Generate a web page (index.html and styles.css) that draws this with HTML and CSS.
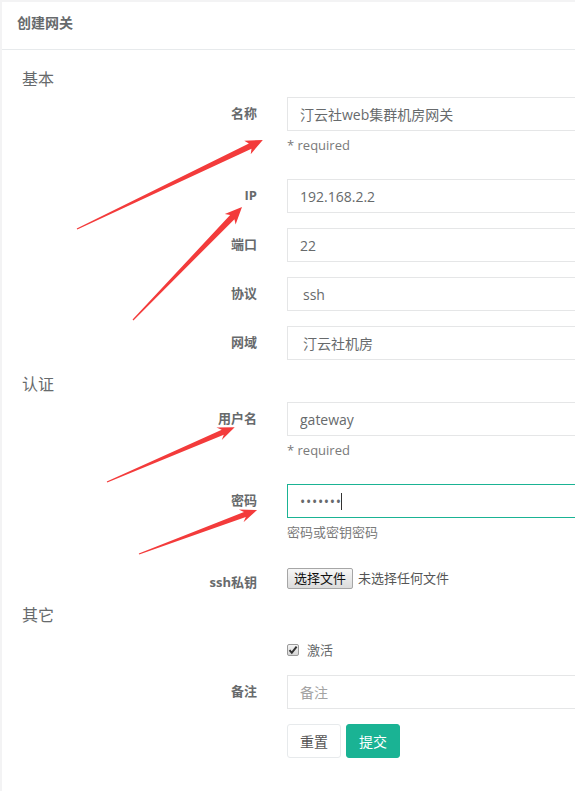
FILE: index.html
```html
<!DOCTYPE html>
<html lang="zh-CN">
<head>
<meta charset="utf-8">
<title>创建网关</title>
<link rel="stylesheet" href="styles.css">
</head>
<body>
<div class="card">
  <div class="card-title"><h5>创建网关</h5></div>
  <div class="card-body">
    <form class="form">
      <h4 class="section">基本</h4>
      <div class="row">
        <label class="lbl">名称</label>
        <div class="ctl">
          <input class="input" type="text" value="汀云社web集群机房网关">
          <p class="help">* required</p>
        </div>
      </div>
      <div class="row">
        <label class="lbl">IP</label>
        <div class="ctl"><input class="input" type="text" value="192.168.2.2"></div>
      </div>
      <div class="row">
        <label class="lbl">端口</label>
        <div class="ctl"><input class="input" type="text" value="22"></div>
      </div>
      <div class="row">
        <label class="lbl">协议</label>
        <div class="ctl"><select class="input select"><option>ssh</option></select></div>
      </div>
      <div class="row">
        <label class="lbl">网域</label>
        <div class="ctl"><select class="input select"><option>汀云社机房</option></select></div>
      </div>

      <h4 class="section">认证</h4>
      <div class="row">
        <label class="lbl">用户名</label>
        <div class="ctl">
          <input class="input" type="text" value="gateway">
          <p class="help">* required</p>
        </div>
      </div>
      <div class="row">
        <label class="lbl">密码</label>
        <div class="ctl">
          <div class="pw-wrap">
            <input class="input focus pw" type="password" value="1234567">
            <span class="caret"></span>
          </div>
          <p class="help">密码或密钥密码</p>
        </div>
      </div>
      <div class="row">
        <label class="lbl">ssh私钥</label>
        <div class="ctl">
          <div class="file">
            <span class="file-btn">选择文件</span>
            <span class="file-name">未选择任何文件</span>
          </div>
        </div>
      </div>

      <h4 class="section">其它</h4>
      <div class="row">
        <span class="lbl"></span>
        <div class="ctl check">
          <span class="cb">
            <svg width="10" height="10" viewBox="0 0 10 10"><path d="M1.5 5.2 L3.8 7.8 L8.6 1.6" fill="none" stroke="#333" stroke-width="2"/></svg>
          </span>
          <span class="check-text">激活</span>
        </div>
      </div>
      <div class="row">
        <label class="lbl">备注</label>
        <div class="ctl"><input class="input" type="text" placeholder="备注"></div>
      </div>
      <div class="row">
        <span class="lbl"></span>
        <div class="ctl buttons">
          <button type="reset" class="btn">重置</button>
          <button type="button" class="btn btn-primary">提交</button>
        </div>
      </div>
    </form>
  </div>
</div>

<svg class="arrows" width="575" height="791" viewBox="0 0 575 791">
  <g fill="#f33b3b">
    <polygon transform="translate(77 229) rotate(-25.57)" points="0,-0.6 192,-3 189,-7.5 206,0 189,7.5 192,3 0,0.6"/>
    <polygon transform="translate(133 320) rotate(-46.03)" points="0,-0.6 143,-3 140,-7.5 157,0 140,7.5 143,3 0,0.6"/>
    <polygon transform="translate(107 482) rotate(-23.25)" points="0,-0.6 126,-2.6 122,-6.8 139,0 122,6.8 126,2.6 0,0.6"/>
    <polygon transform="translate(139 554) rotate(-20.45)" points="0,-0.6 113,-2.6 109,-6.8 126,0 109,6.8 113,2.6 0,0.6"/>
  </g>
</svg>
</body>
</html>
```

FILE: styles.css
```css
html, body {
  margin: 0;
  overflow: hidden;
}
body {
  position: relative;
  width: 575px;
  height: 791px;
  background: #f3f3f4;
  font-family: "Open Sans", "Noto Sans CJK SC", sans-serif;
  font-size: 13px;
  color: #676a6c;
}
.card {
  box-sizing: border-box;
  margin: 2px 0 0 2px;
  width: 573px;
  height: 789px;
  background: #fff;
}
.card-title {
  box-sizing: border-box;
  height: 48px;
  padding: 12px 15px 0;
  border-bottom: 1px solid #e7eaec;
}
.card-title h5 {
  margin: 0;
  font-size: 14px;
  font-weight: 600;
  line-height: 18px;
}
.card-body {
  padding: 20px 0 20px 20px;
}
.form {
  margin: 0;
}
.section {
  margin: 0 0 9px;
  font-size: 16px;
  font-weight: 400;
  line-height: 18px;
}
.row {
  display: grid;
  grid-template-columns: 235px 1fr;
  column-gap: 30px;
  margin-bottom: 15px;
}
.lbl {
  text-align: right;
  font-weight: 700;
  padding-top: 7px;
  line-height: 18px;
}
.input {
  display: block;
  box-sizing: border-box;
  width: 100%;
  height: 34px;
  margin: 0;
  padding: 6px 12px;
  border: 1px solid #e5e6e7;
  border-right-width: 0;
  border-radius: 0;
  background: #fff;
  font-family: inherit;
  font-size: 14px;
  color: #676a6c;
  outline: none;
}
.input::placeholder {
  color: #a3a3a3;
}
.select {
  appearance: none;
  -webkit-appearance: none;
  padding-left: 15px;
}
.focus {
  border-color: #1ab394;
}
.pw {
  letter-spacing: 0.7px;
}
.pw-wrap {
  position: relative;
}
.caret {
  position: absolute;
  left: 54px;
  top: 9px;
  width: 1px;
  height: 17px;
  background: #333;
}
.help {
  margin: 5px 0 10px;
  line-height: 18px;
  color: #7a7a7a;
}
.file {
  display: flex;
  align-items: center;
  gap: 5px;
  margin-top: 2px;
}
.file-btn {
  box-sizing: border-box;
  height: 21px;
  padding: 0 6px;
  border: 1px solid #a6a6a6;
  border-radius: 2px;
  background: linear-gradient(#f7f7f7, #dcdcdc);
  color: #111;
  font-size: 13px;
  line-height: 19px;
}
.file-name {
  color: #555;
  font-size: 13px;
  line-height: 19px;
}
.check {
  display: flex;
  align-items: center;
  gap: 8px;
  min-height: 20px;
  padding-top: 7px;
  line-height: 18px;
}
.cb {
  box-sizing: border-box;
  display: flex;
  align-items: center;
  justify-content: center;
  width: 12px;
  height: 12px;
  border: 1px solid #9a9a9a;
  border-radius: 2px;
  background: linear-gradient(#f4f4f4, #d6d6d6);
}
.check-text {
  color: #676a6c;
}
.buttons {
  display: flex;
  gap: 5px;
}
.btn {
  box-sizing: border-box;
  height: 34px;
  padding: 0 12px;
  border: 1px solid #e7eaec;
  border-radius: 3px;
  background: #fff;
  font-family: inherit;
  font-size: 14px;
  color: #555;
}
.btn-primary {
  background: #1ab394;
  border-color: #1ab394;
  color: #fff;
}
.arrows {
  position: absolute;
  top: 0;
  left: 0;
  pointer-events: none;
}
```
